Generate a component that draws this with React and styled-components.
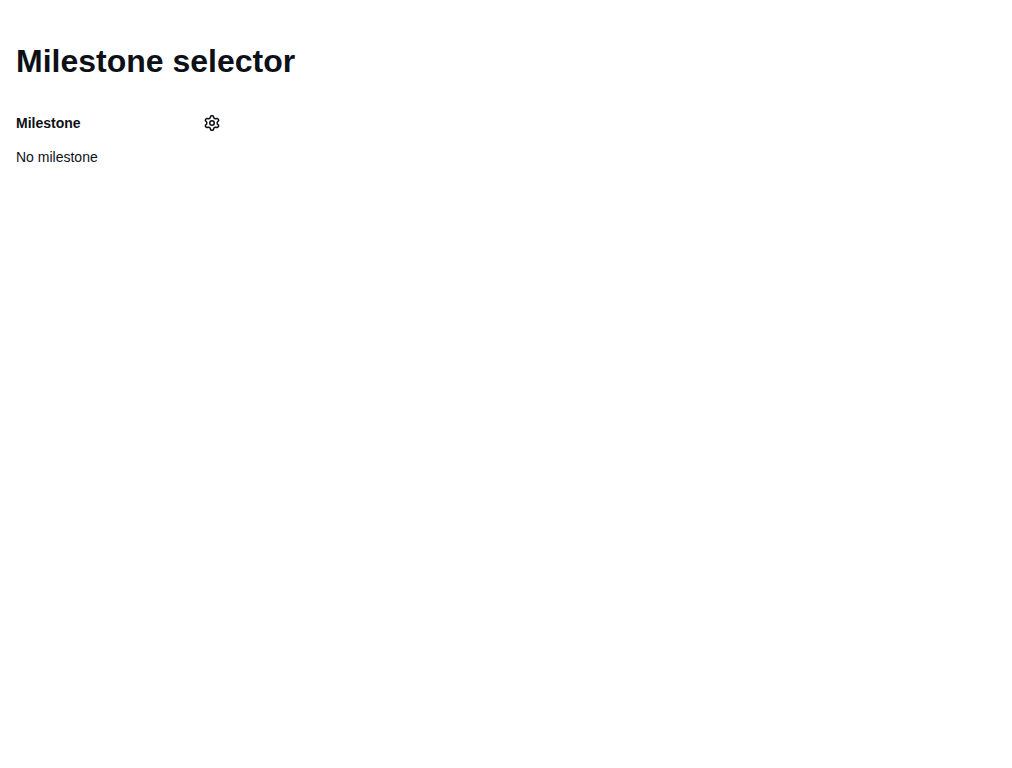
import React from "react";
import styled, { createGlobalStyle } from "styled-components";

const GlobalStyle = createGlobalStyle`
  *, *::before, *::after {
    box-sizing: border-box;
  }
  body {
    margin: 0;
    background: #ffffff;
    color: #0d1117;
    font-family: "Liberation Sans", Arial, sans-serif;
    font-size: 14px;
    line-height: 20px;
  }
`;

const Page = styled.main`
  display: flex;
  flex-direction: column;
  gap: 22px;
  padding: 37px 16px 16px;
`;

const Title = styled.h1`
  margin: 0;
  font-size: 32px;
  font-weight: 700;
  line-height: 48px;
`;

const Sidebar = styled.section`
  display: flex;
  flex-direction: column;
  gap: 8px;
  max-width: 212px;
`;

const SectionHeader = styled.header`
  display: flex;
  align-items: center;
  justify-content: space-between;
`;

const SectionTitle = styled.h2`
  margin: 0;
  font-size: 14px;
  font-weight: 700;
  line-height: 20px;
`;

const IconButton = styled.button`
  display: flex;
  align-items: center;
  justify-content: center;
  width: 32px;
  height: 32px;
  padding: 0;
  border: 0;
  border-radius: 6px;
  background: transparent;
  color: inherit;
  cursor: pointer;
`;

const EmptyText = styled.p`
  margin: 0;
`;

function GearIcon() {
  return (
    <svg width="16" height="16" viewBox="0 0 16 16" fill="currentColor" aria-hidden="true">
      <path d="M8 0a8.2 8.2 0 0 1 .701.031C9.444.095 9.99.645 10.16 1.29l.288 1.107c.018.066.079.158.212.224.231.114.454.243.668.386.123.082.233.09.299.071l1.103-.303c.644-.176 1.392.021 1.82.63.27.385.506.792.704 1.218.315.675.111 1.422-.364 1.891l-.814.806c-.049.048-.098.147-.088.294.016.257.016.515 0 .772-.01.147.038.246.088.294l.814.806c.475.469.679 1.216.364 1.891a7.977 7.977 0 0 1-.704 1.217c-.428.61-1.176.807-1.82.63l-1.102-.302c-.067-.019-.177-.011-.3.071a5.909 5.909 0 0 1-.668.386c-.133.066-.194.158-.211.224l-.29 1.106c-.168.646-.715 1.196-1.458 1.26a8.006 8.006 0 0 1-1.402 0c-.743-.064-1.289-.614-1.458-1.26l-.289-1.106c-.018-.066-.079-.158-.212-.224a5.738 5.738 0 0 1-.668-.386c-.123-.082-.233-.09-.299-.071l-1.103.303c-.644.176-1.392-.021-1.82-.63a8.12 8.12 0 0 1-.704-1.218c-.315-.675-.111-1.422.363-1.891l.815-.806c.05-.048.098-.147.088-.294a6.214 6.214 0 0 1 0-.772c.01-.147-.038-.246-.088-.294l-.815-.806C.635 6.045.431 5.298.746 4.623a7.92 7.92 0 0 1 .704-1.217c.428-.61 1.176-.807 1.82-.63l1.102.302c.067.019.177.011.3-.071.214-.143.437-.272.668-.386.133-.066.194-.158.211-.224l.29-1.106C6.009.645 6.556.095 7.299.03 7.53.01 7.764 0 8 0Zm-.571 1.525c-.036.003-.108.036-.137.146l-.289 1.105c-.147.561-.549.967-.998 1.189-.173.086-.34.183-.5.29-.417.278-.97.423-1.529.27l-1.103-.303c-.109-.03-.175.016-.195.045-.22.312-.412.644-.573.99-.014.031-.021.11.059.19l.815.806c.411.406.562.957.53 1.456a4.709 4.709 0 0 0 0 .582c.032.499-.119 1.05-.53 1.456l-.815.806c-.081.08-.073.159-.059.19.162.346.353.677.573.989.02.03.085.076.195.046l1.102-.303c.56-.153 1.113-.008 1.53.27.161.107.328.204.501.29.447.222.85.629.997 1.189l.289 1.105c.029.109.101.143.137.146a6.6 6.6 0 0 0 1.142 0c.036-.003.108-.036.137-.146l.289-1.105c.147-.561.549-.967.998-1.189.173-.086.34-.183.5-.29.417-.278.97-.423 1.529-.27l1.103.303c.109.029.175-.016.195-.045.22-.313.411-.644.573-.99.014-.031.021-.11-.059-.19l-.815-.806c-.411-.406-.562-.957-.53-1.456a4.709 4.709 0 0 0 0-.582c-.032-.499.119-1.05.53-1.456l.815-.806c.081-.08.073-.159.059-.19a6.464 6.464 0 0 0-.573-.989c-.02-.03-.085-.076-.195-.046l-1.102.303c-.56.153-1.113.008-1.53-.27a4.44 4.44 0 0 0-.501-.29c-.447-.222-.85-.629-.997-1.189l-.289-1.105c-.029-.11-.101-.143-.137-.146a6.6 6.6 0 0 0-1.142 0ZM11 8a3 3 0 1 1-6 0 3 3 0 0 1 6 0ZM9.5 8a1.5 1.5 0 1 0-3.001.001A1.5 1.5 0 0 0 9.5 8Z" />
    </svg>
  );
}

export default function App() {
  return (
    <>
      <GlobalStyle />
      <Page>
        <Title>Milestone selector</Title>
        <Sidebar aria-labelledby="milestone-title">
          <SectionHeader>
            <SectionTitle id="milestone-title">Milestone</SectionTitle>
            <IconButton type="button" aria-label="Edit milestone">
              <GearIcon />
            </IconButton>
          </SectionHeader>
          <EmptyText>No milestone</EmptyText>
        </Sidebar>
      </Page>
    </>
  );
}
